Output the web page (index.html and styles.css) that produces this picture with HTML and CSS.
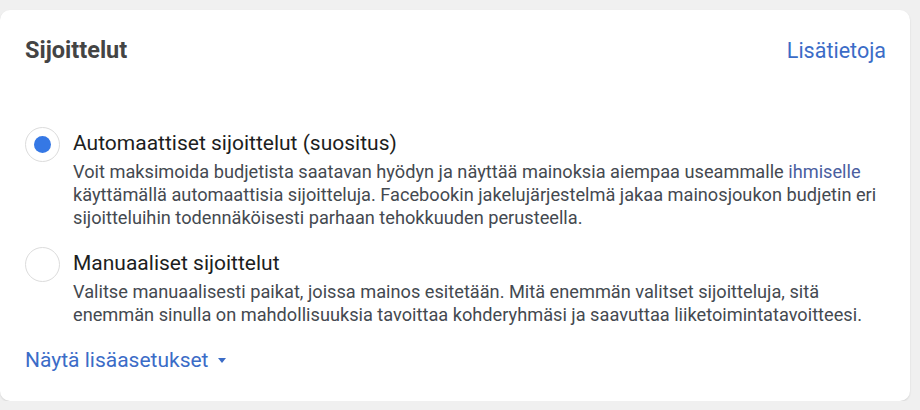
FILE: index.html
```html
<!DOCTYPE html>
<html lang="fi">
<head>
    <meta charset="UTF-8">
    <meta name="viewport" content="width=device-width, initial-scale=1.0">
    <title>Sijoittelut</title>
    <link rel="stylesheet" href="styles.css">
</head>
<body>

    <div class="card">
        <div class="card-header">
            <h2>Sijoittelut</h2>
            <a class="link" href="#">Lisätietoja</a>
        </div>

        <div class="options">
            <label class="option">
                <span class="radio checked"><span class="dot"></span></span>
                <span class="option-body">
                    <span class="option-title">Automaattiset sijoittelut (suositus)</span>
                    <span class="option-desc">Voit maksimoida budjetista saatavan hyödyn ja näyttää mainoksia aiempaa useammalle <a class="inline-link" href="#">ihmiselle</a> käyttämällä automaattisia sijoitteluja. Facebookin jakelujärjestelmä jakaa mainosjoukon budjetin eri sijoitteluihin todennäköisesti parhaan tehokkuuden perusteella.</span>
                </span>
            </label>
            <label class="option">
                <span class="radio"></span>
                <span class="option-body">
                    <span class="option-title">Manuaaliset sijoittelut</span>
                    <span class="option-desc">Valitse manuaalisesti paikat, joissa mainos esitetään. Mitä enemmän valitset sijoitteluja, sitä enemmän sinulla on mahdollisuuksia tavoittaa kohderyhmäsi ja saavuttaa liiketoimintatavoitteesi.</span>
                </span>
            </label>
        </div>

        <a class="more link" href="#">Näytä lisäasetukset <span class="caret"></span></a>
    </div>

</body>
</html>
```

FILE: styles.css
```css
body {
    margin: 0;
    padding-top: 10px;
    background: #f0f0f0;
    font-family: Roboto, "Liberation Sans", Arial, sans-serif;
}
.card {
    box-sizing: border-box;
    width: 910px;
    height: 391px;
    background: #fff;
    border-radius: 10px;
    box-shadow: 0 1px 2px rgba(0, 0, 0, 0.12);
    padding: 26px 24px 0 25px;
}
.card-header {
    display: flex;
    justify-content: space-between;
    align-items: baseline;
}
.card-header h2 {
    margin: 0;
    font-size: 23.5px;
    line-height: 28px;
    font-weight: 700;
    color: #444;
}
.link {
    color: #3b6cc7;
    text-decoration: none;
    font-size: 21.5px;
}
.options {
    margin-top: 65px;
    display: flex;
    flex-direction: column;
    gap: 20px;
}
.option {
    display: flex;
    align-items: flex-start;
    gap: 13px;
}
.radio {
    flex: none;
    box-sizing: border-box;
    width: 35px;
    height: 35px;
    margin-top: -2px;
    border: 1px solid #dcdcdc;
    border-radius: 50%;
    display: flex;
    align-items: center;
    justify-content: center;
}
.dot {
    width: 17px;
    height: 17px;
    border-radius: 50%;
    background: #3578e5;
}
.option-body {
    display: flex;
    flex-direction: column;
}
.option-title {
    font-size: 21px;
    line-height: 28px;
    color: #1c1e21;
}
.option-desc {
    margin-top: 3px;
    font-size: 18.2px;
    line-height: 23px;
    color: #444950;
}
.inline-link {
    color: #4a5ea0;
    text-decoration: none;
}
.more {
    display: inline-flex;
    align-items: center;
    gap: 9px;
    margin-top: 22px;
    font-size: 21px;
    line-height: 24px;
}
.caret {
    width: 0;
    height: 0;
    border-left: 4.5px solid transparent;
    border-right: 4.5px solid transparent;
    border-top: 5px solid #3b6cc7;
}
```
